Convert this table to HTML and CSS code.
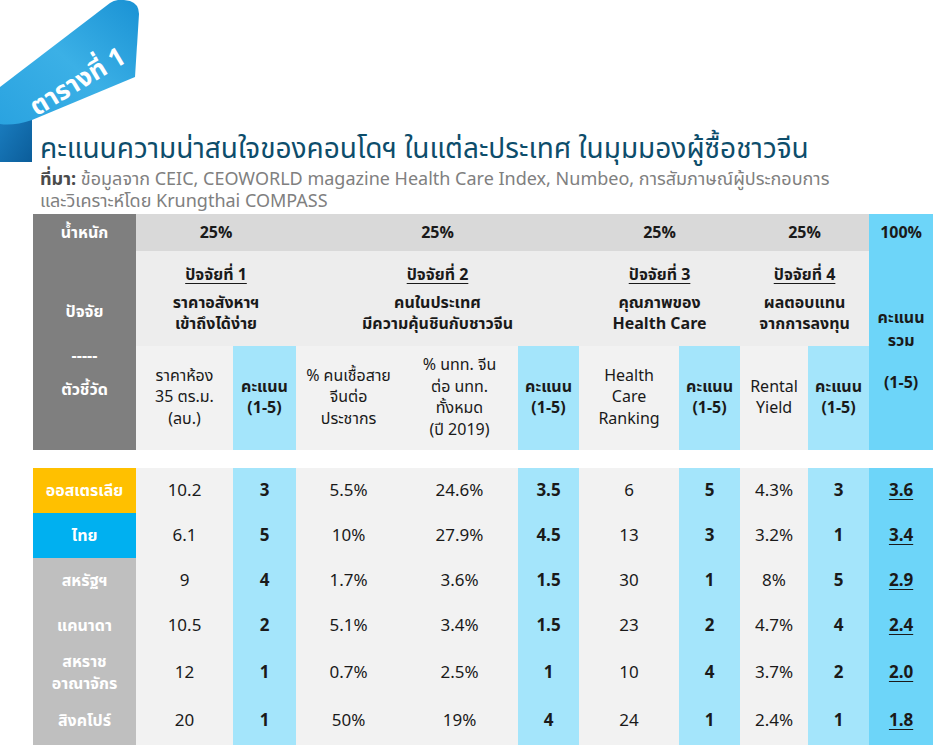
FILE: index.html
```html
<!DOCTYPE html>
<html lang="th">
<head>
<meta charset="utf-8">
<title>ตารางที่ 1</title>
<link rel="stylesheet" href="styles.css">
</head>
<body>
<div class="page">
  <svg class="ribbon" width="142" height="162" viewBox="0 0 142 162" aria-hidden="true">
    <defs>
      <linearGradient id="band" x1="0" y1="1" x2="1" y2="0">
        <stop offset="0" stop-color="#2aa3e0"/>
        <stop offset="0.5" stop-color="#3bb0e6"/>
        <stop offset="1" stop-color="#1a92d4"/>
      </linearGradient>
      <linearGradient id="fold" x1="0" y1="0" x2="1" y2="1">
        <stop offset="0" stop-color="#1b7fc2"/>
        <stop offset="1" stop-color="#0b5d9a"/>
      </linearGradient>
    </defs>
    <path d="M0 112 L32 120 L32 162 L0 162 Z" fill="url(#fold)"/>
    <path d="M0 87 L110 3 Q116 -1 124 0 L130 1 Q139 4 139 14 L135 77 L32 120 Q14 126 0 124 Z" fill="url(#band)"/>
    <text class="ribbon-text" x="0" y="0" transform="translate(82 89) rotate(-31)" text-anchor="middle">ตารางที่ 1</text>
  </svg>
  <header class="head">
    <h1 class="title">คะแนนความน่าสนใจของคอนโดฯ ในแต่ละประเทศ ในมุมมองผู้ซื้อชาวจีน</h1>
    <p class="source"><b class="source-key">ที่มา:</b> ข้อมูลจาก CEIC, CEOWORLD magazine Health Care Index, Numbeo, การสัมภาษณ์ผู้ประกอบการ<br>และวิเคราะห์โดย Krungthai COMPASS</p>
  </header>
  <table class="score">
    <colgroup>
      <col class="c-lab">
      <col class="c1">
      <col class="c2">
      <col class="c3">
      <col class="c4">
      <col class="c-sc">
      <col class="c6">
      <col class="c-sc">
      <col class="c8">
      <col class="c-sc">
      <col class="c-tot">
    </colgroup>
    <tr class="r-weight">
      <th class="lab">น้ำหนัก</th>
      <th colspan="2">25%</th>
      <th colspan="3">25%</th>
      <th colspan="2">25%</th>
      <th colspan="2">25%</th>
      <th class="tot">100%</th>
    </tr>
    <tr class="r-factor">
      <th class="lab" rowspan="2">
        <div class="lab-top">ปัจจัย</div>
        <div class="lab-dash">-----</div>
        <div class="lab-bot">ตัวชี้วัด</div>
      </th>
      <th colspan="2"><span class="f-no">ปัจจัยที่ 1</span><span class="f-name">ราคาอสังหาฯ<br>เข้าถึงได้ง่าย</span></th>
      <th colspan="3"><span class="f-no">ปัจจัยที่ 2</span><span class="f-name">คนในประเทศ<br>มีความคุ้นชินกับชาวจีน</span></th>
      <th colspan="2"><span class="f-no">ปัจจัยที่ 3</span><span class="f-name">คุณภาพของ<br>Health Care</span></th>
      <th colspan="2"><span class="f-no">ปัจจัยที่ 4</span><span class="f-name">ผลตอบแทน<br>จากการลงทุน</span></th>
      <th class="tot tot-head" rowspan="2">
        <div class="tot-top">คะแนน<br>รวม</div>
        <div class="tot-bot">(1-5)</div>
      </th>
    </tr>
    <tr class="r-ind">
      <td>ราคาห้อง<br>35 ตร.ม.<br>(ลบ.)</td>
      <td class="sc b">คะแนน<br>(1-5)</td>
      <td>% คนเชื้อสาย<br>จีนต่อ<br>ประชากร</td>
      <td>% นทท. จีน<br>ต่อ นทท.<br>ทั้งหมด<br>(ปี 2019)</td>
      <td class="sc b">คะแนน<br>(1-5)</td>
      <td>Health<br>Care<br>Ranking</td>
      <td class="sc b">คะแนน<br>(1-5)</td>
      <td>Rental<br>Yield</td>
      <td class="sc b">คะแนน<br>(1-5)</td>
    </tr>
    <tr class="r-gap"><td colspan="11"></td></tr>
    <tr class="r-data">
      <th class="cty cty-au">ออสเตรเลีย</th>
      <td>10.2</td><td class="sc b">3</td><td>5.5%</td><td>24.6%</td><td class="sc b">3.5</td><td>6</td><td class="sc b">5</td><td>4.3%</td><td class="sc b">3</td><td class="tot total">3.6</td>
    </tr>
    <tr class="r-data">
      <th class="cty cty-th">ไทย</th>
      <td>6.1</td><td class="sc b">5</td><td>10%</td><td>27.9%</td><td class="sc b">4.5</td><td>13</td><td class="sc b">3</td><td>3.2%</td><td class="sc b">1</td><td class="tot total">3.4</td>
    </tr>
    <tr class="r-data">
      <th class="cty">สหรัฐฯ</th>
      <td>9</td><td class="sc b">4</td><td>1.7%</td><td>3.6%</td><td class="sc b">1.5</td><td>30</td><td class="sc b">1</td><td>8%</td><td class="sc b">5</td><td class="tot total">2.9</td>
    </tr>
    <tr class="r-data">
      <th class="cty">แคนาดา</th>
      <td>10.5</td><td class="sc b">2</td><td>5.1%</td><td>3.4%</td><td class="sc b">1.5</td><td>23</td><td class="sc b">2</td><td>4.7%</td><td class="sc b">4</td><td class="tot total">2.4</td>
    </tr>
    <tr class="r-data r-tall">
      <th class="cty cty-2l">สหราช<br>อาณาจักร</th>
      <td>12</td><td class="sc b">1</td><td>0.7%</td><td>2.5%</td><td class="sc b">1</td><td>10</td><td class="sc b">4</td><td>3.7%</td><td class="sc b">2</td><td class="tot total">2.0</td>
    </tr>
    <tr class="r-data r-last">
      <th class="cty">สิงคโปร์</th>
      <td>20</td><td class="sc b">1</td><td>50%</td><td>19%</td><td class="sc b">4</td><td>24</td><td class="sc b">1</td><td>2.4%</td><td class="sc b">1</td><td class="tot total">1.8</td>
    </tr>
  </table>
</div>
</body>
</html>
```

FILE: styles.css
```css
* { box-sizing: border-box; }
html, body { margin: 0; padding: 0; background: #ffffff; }
body {
  font-family: "Noto Sans Thai", "Noto Sans", "DejaVu Sans", sans-serif;
  color: #1a1a1a;
  width: 933px;
  height: 746px;
  overflow: hidden;
}
.page { position: relative; }
.ribbon { position: absolute; left: 0; top: 0; }
.ribbon-text {
  font-family: "Noto Sans Thai", "Noto Sans", sans-serif;
  font-weight: 700;
  font-size: 26px;
  fill: #ffffff;
}
.head { padding: 133px 0 0 40px; }
.title {
  margin: 0;
  font-size: 28px;
  line-height: 34px;
  font-weight: 400;
  color: #0d4d6b;
  letter-spacing: 0;
}
.source {
  margin: 2px 0 0;
  font-size: 18px;
  line-height: 22px;
  color: #808080;
  letter-spacing: 0;
}
.source-key { color: #4a4a4a; font-weight: 700; }

.score {
  margin: 1px 0 0 33px;
  border-collapse: collapse;
  table-layout: fixed;
  width: 900px;
}
.c-lab { width: 103px; }
.c1 { width: 97px; }
.c2 { width: 63px; }
.c-sc { width: 61px; }
.c3 { width: 105px; }
.c4 { width: 117px; }
.c6 { width: 100px; }
.c8 { width: 68px; }
.c-tot { width: 64px; }

.score th, .score td {
  padding: 0;
  text-align: center;
  vertical-align: middle;
  font-size: 16px;
}
.score th { font-weight: 700; }
.b { font-weight: 700; }

.r-weight { height: 37px; }
.r-weight th { background: #d9d9d9; }
.r-factor { height: 95px; }
.r-factor th { background: #ededed; }
.r-ind { height: 104px; }
.r-ind td { background: #f2f2f2; line-height: 21.5px; }
.r-gap { height: 18px; }
.r-gap td { background: #ffffff; }

.score .lab { background: #7f7f7f; color: #ffffff; }
.lab-dash { margin: 20px 0 10px; }
.score .tot { background: #6dd5f9; }
.tot-top { line-height: 23px; }
.tot-bot { margin-top: 18px; }

.f-no { display: block; text-decoration: underline; text-underline-offset: 3px; margin-bottom: 6px; }
.f-name { display: block; line-height: 21px; }

.score td.sc { background: #a4e5fb; }

.r-data { height: 45px; }
.r-data td { background: #f2f2f2; font-size: 17px; }
.r-data td.sc { background: #a4e5fb; }
.r-data td.tot { background: #6dd5f9; }
.r-tall { height: 49px; }
.r-last { height: 48px; }
.cty { color: #ffffff; background: #bfbfbf; font-size: 17px; line-height: 20px; }
.cty-2l { line-height: 22px; }
.score .cty-au { background: #ffc000; }
.score .cty-th { background: #00b0f0; }
.total { font-weight: 700; text-decoration: underline; text-underline-offset: 3px; }
```
